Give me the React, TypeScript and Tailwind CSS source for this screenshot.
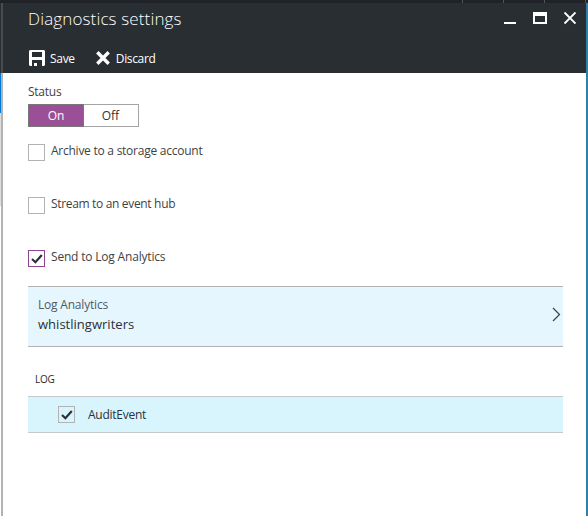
import type { ReactNode } from 'react';

function Check({ label, tracking, checked }: { label: string; tracking: string; checked?: boolean }) {
  return (
    <div className="flex h-[53px] items-start">
      <span className={`mt-px flex h-[17px] w-[17px] shrink-0 items-center justify-center border ${checked ? 'border-[#8f4292]' : 'border-[#b3b3b3]'}`}>
        {checked && <Tick />}
      </span>
      <Label className={`ml-[6px] text-[12px] leading-[16px] text-[#3f3f3f] ${tracking}`}>{label}</Label>
    </div>
  );
}

function Tick() {
  return (
    <svg width="12" height="10" viewBox="0 0 12 10" fill="none" stroke="#2b2f38" strokeWidth="2.2">
      <path d="M1 5 L4.4 8.2 L10.8 1" />
    </svg>
  );
}

function Label({ className, children }: { className: string; children: ReactNode }) {
  return <span className={`whitespace-nowrap ${className}`}>{children}</span>;
}

export default function App() {
  return (
    <div className="flex h-[516px] w-[588px] flex-col overflow-hidden bg-white font-['Open_Sans','Noto_Sans',sans-serif]">
      <div className="flex h-[3px] shrink-0 justify-end gap-10 bg-[#1f2327] pr-[2px]">
        <i className="w-px bg-[#505357]" />
        <i className="w-px bg-[#505357]" />
        <i className="w-px bg-[#505357]" />
        <i className="w-px bg-[#505357]" />
      </div>
      <div className="flex flex-1">
        <div className="flex w-px flex-col">
          <div className="h-[70px] bg-[#292e32]" />
          <div className="h-[40px] bg-[#0078d7]" />
          <div className="h-[93px] bg-[#dddddd]" />
        </div>
        <div className="flex w-[2px] flex-col">
          <div className="h-[70px] bg-[#484c50]" />
          <div className="flex-1 bg-[#b3b3b3]" />
        </div>
        <main className="flex w-[583px] flex-col">
          <header className="h-[70px] bg-[#292e32] pl-[25px] pr-[10px] text-white">
            <div className="flex h-[40px] items-start justify-between">
              <h1 className="mt-[4px] whitespace-nowrap text-[17px] font-light leading-[24px] tracking-[0.14px]">Diagnostics settings</h1>
              <svg className="mt-[8px]" width="73" height="14" viewBox="0 0 73 14" fill="none" stroke="white">
                <path d="M1 12h12" strokeWidth="2" />
                <path d="M31 2v10h12V2" strokeWidth="2" />
                <path d="M30 3h14" strokeWidth="4" />
                <path d="M61.5 1.5l11 11m0-11l-11 11" strokeWidth="1.8" />
              </svg>
            </div>
            <div className="flex h-[30px] items-center text-[12px] leading-[16px]">
              <svg width="17" height="16" viewBox="0 0 17 16">
                <path fill="white" fillRule="evenodd" d="M1 1L2 0H16L17 1V15L16 16H14V10H4V16H2L1 15ZM4 2V7H14V2ZM6 13H9V16H6Z" />
              </svg>
              <Label className="ml-[5px] mt-px tracking-[-0.3px]">Save</Label>
              <svg className="ml-[21px]" width="14" height="14" viewBox="0 0 14 14" stroke="white" strokeWidth="3.4">
                <path d="M1.3 1.3l11.4 11.4M12.7 1.3L1.3 12.7" />
              </svg>
              <Label className="ml-[6px] mt-px tracking-[-0.35px]">Discard</Label>
            </div>
          </header>
          <div className="flex flex-col pl-[25px] pr-[23px] pt-[11px]">
            <Label className="h-[20px] text-[12px] leading-[16px] tracking-[-0.25px] text-[#3f3f3f]">Status</Label>
            <div className="flex h-[23px] w-[111px] border border-[#a5a5a5] text-[12px] leading-[21px]">
              <div className="-m-px w-[56px] border border-[#777777] bg-[#9b4f96] text-center text-white">On</div>
              <div className="flex-1 text-center text-[#333333]">Off</div>
            </div>
            <div className="mt-[16px]">
              <Check label="Archive to a storage account" tracking="tracking-[-0.25px]" />
              <Check label="Stream to an event hub" tracking="tracking-[-0.33px]" />
              <Check label="Send to Log Analytics" tracking="tracking-[-0.19px]" checked />
            </div>
            <div className="-mt-[16px] flex h-[61px] items-center justify-between border-y border-[#b3b3b3] bg-[#e5f6fe] pl-[10px] pr-[2px]">
              <div className="flex flex-col pb-[4px]">
                <Label className="text-[12px] leading-[18px] tracking-[-0.2px] text-[#515963]">Log Analytics</Label>
                <Label className="text-[13px] leading-[20px] tracking-[0.02px] text-[#2b303b]">whistlingwriters</Label>
              </div>
              <svg className="-mt-[5px]" width="9" height="15" viewBox="0 0 9 15" fill="none" stroke="#3b414b" strokeWidth="1.2">
                <path d="M1 1L7.5 7.5L1 14" />
              </svg>
            </div>
            <div className="flex h-[49px] items-end pb-[10px] pl-[7px]">
              <Label className="text-[10px] leading-[14px] tracking-[-0.3px] text-[#292929]">LOG</Label>
            </div>
            <div className="flex h-[37px] items-center border-y border-[#c5cacc] bg-[#d8f5fd] pl-[30px]">
              <span className="flex h-[17px] w-[17px] items-center justify-center border border-[#b3b3b3]"><Tick /></span>
              <Label className="ml-[13px] text-[12px] leading-[16px] tracking-[-0.25px] text-[#2b303b]">AuditEvent</Label>
            </div>
          </div>
        </main>
        <div className="w-[2px] bg-[#347fa5]" />
      </div>
    </div>
  );
}
